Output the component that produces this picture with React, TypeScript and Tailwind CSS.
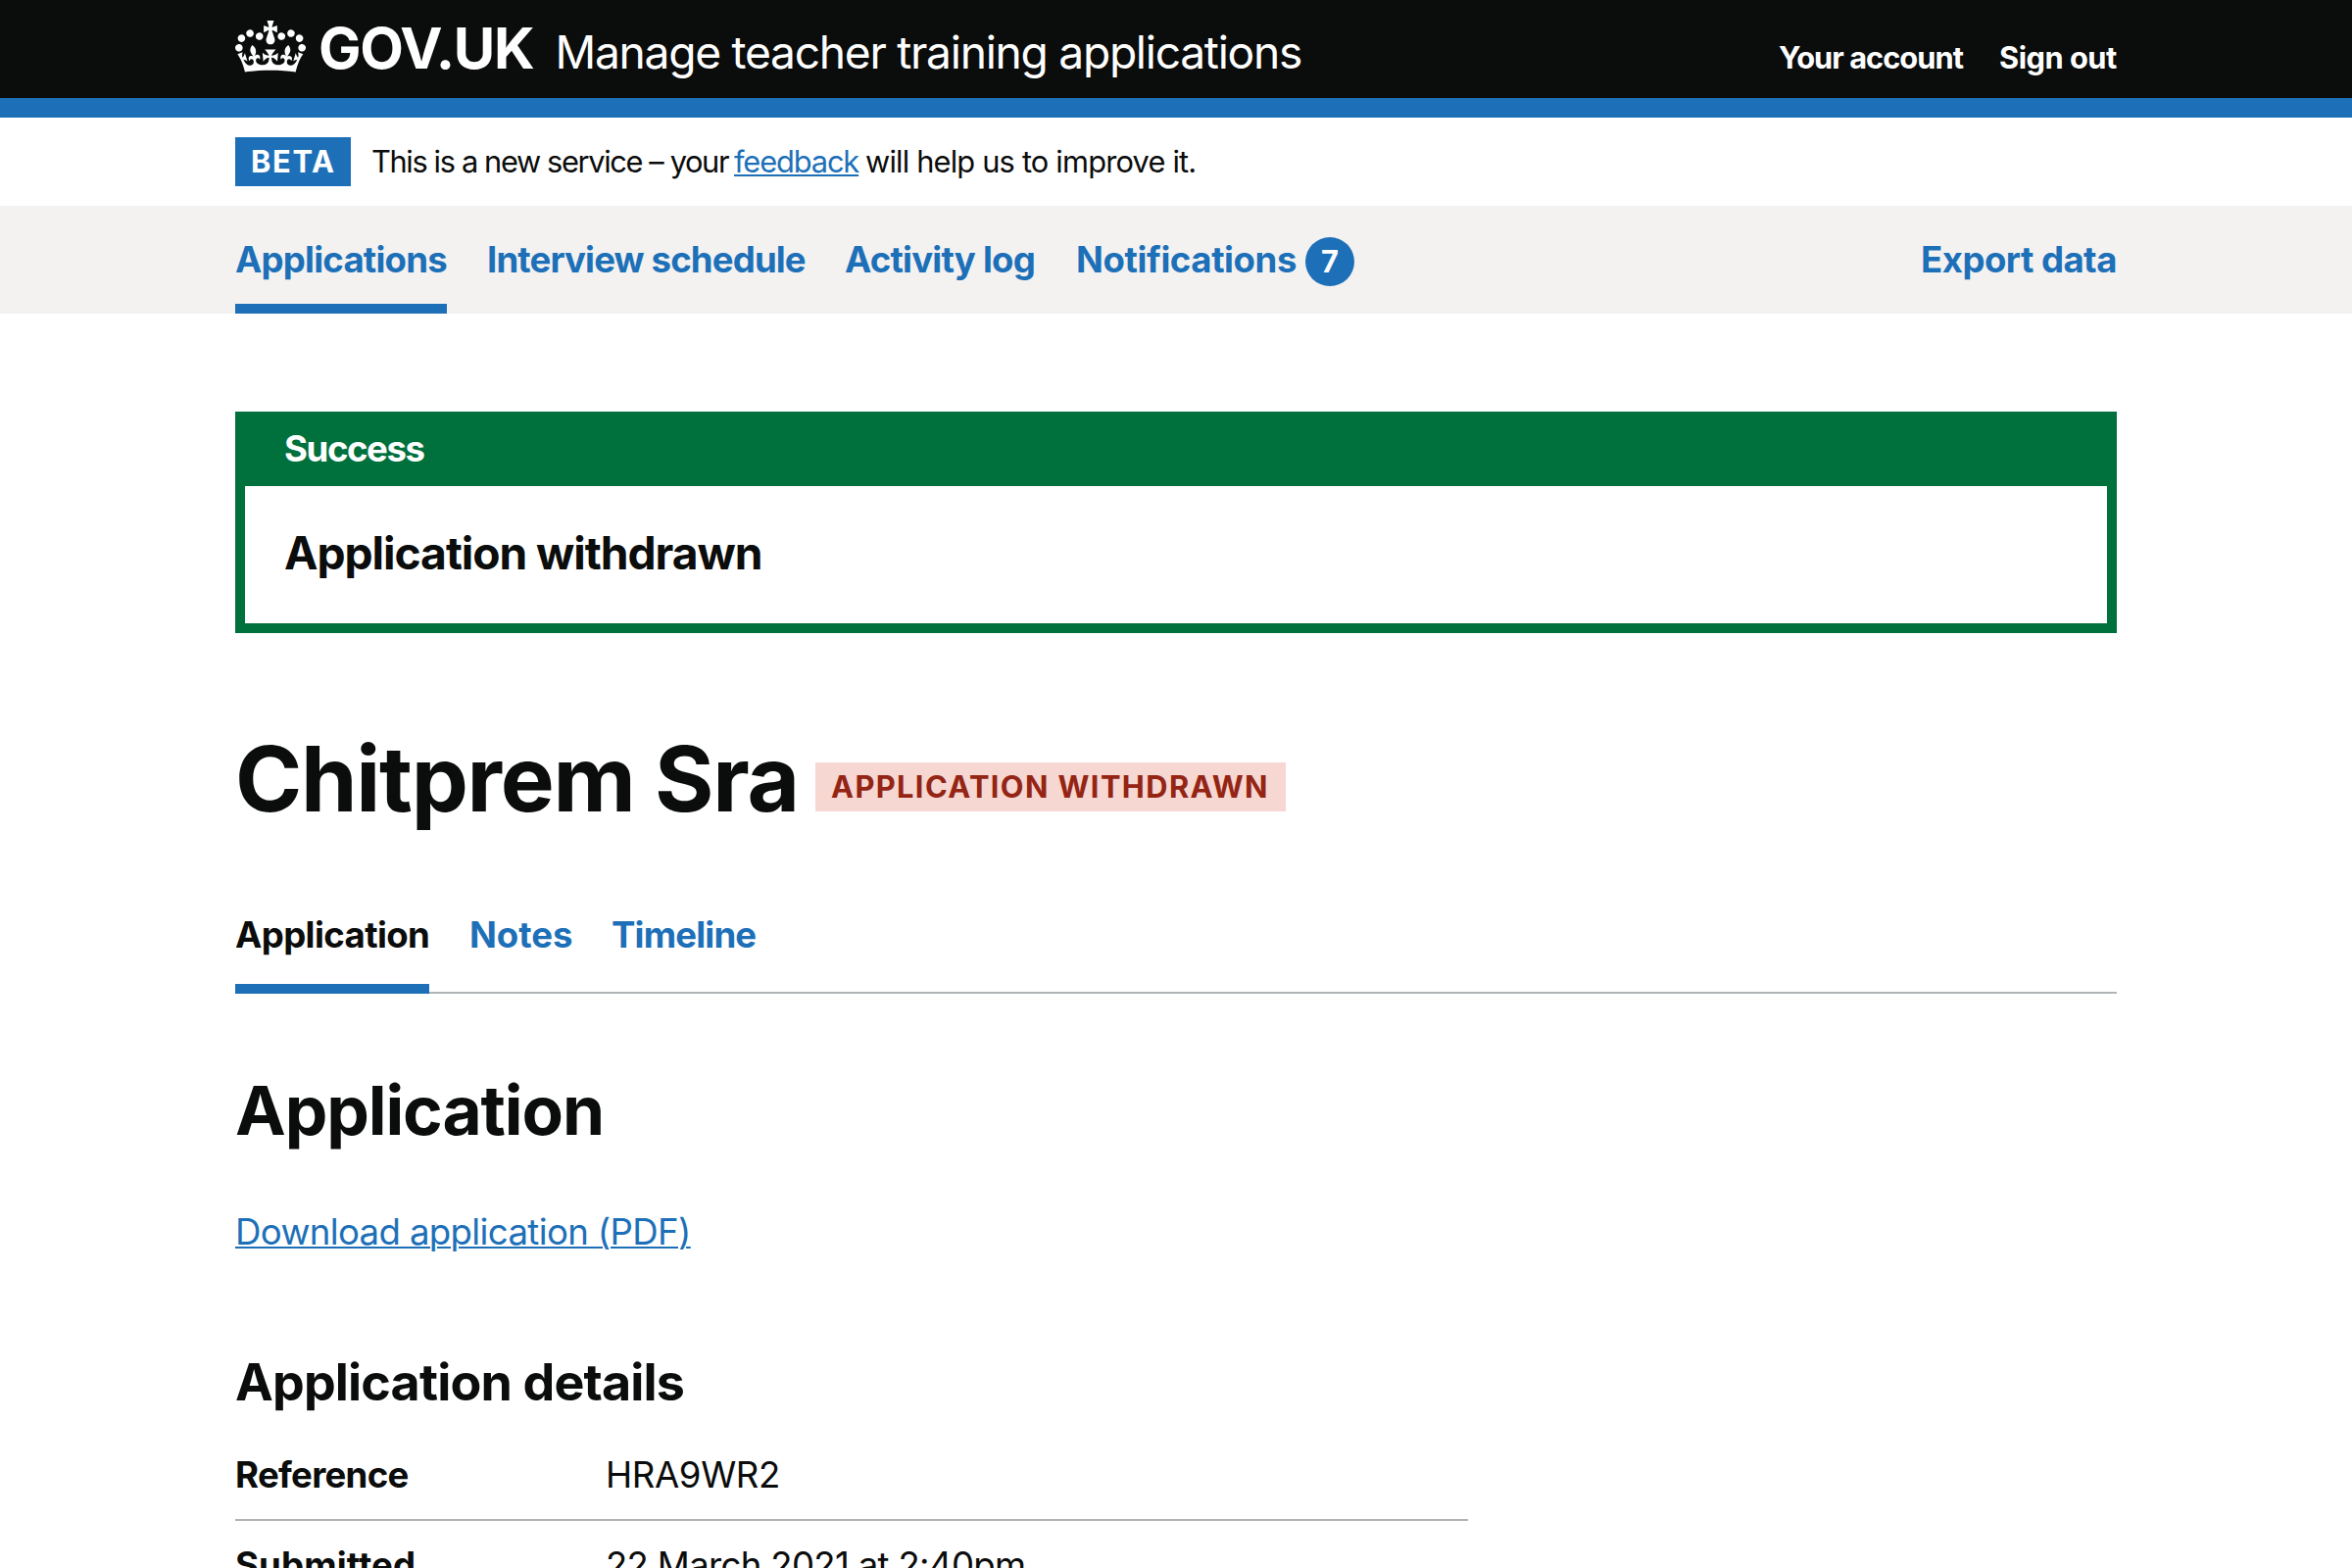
function Crown() {
  return (
    <svg viewBox="0 0 132 97" className="mt-[21px] h-[53px] w-[72px] shrink-0" fill="currentColor" aria-hidden="true">
      <path
        fillRule="evenodd"
        d="M25 30.2c3.5 1.5 7.7-.2 9.1-3.7 1.5-3.6-.2-7.8-3.9-9.2-3.6-1.4-7.6.3-9.1 3.9-1.4 3.5.3 7.5 3.9 9zM9 39.5c3.6 1.5 7.8-.2 9.2-3.7 1.5-3.6-.2-7.8-3.9-9.1-3.6-1.5-7.6.2-9.1 3.8-1.4 3.5.3 7.5 3.8 9zM4.4 57.2c3.5 1.5 7.7-.2 9.1-3.8 1.5-3.6-.2-7.7-3.9-9.1-3.5-1.5-7.6.3-9.1 3.8-1.4 3.5.3 7.6 3.9 9.1zm38.3-21.4c3.5 1.5 7.7-.2 9.1-3.8 1.5-3.6-.2-7.7-3.9-9.1-3.6-1.5-7.6.3-9.1 3.8-1.3 3.6.4 7.7 3.9 9.1zm64.4-5.6c-3.6 1.5-7.8-.2-9.1-3.7-1.5-3.6.2-7.8 3.8-9.2 3.6-1.4 7.7.3 9.2 3.9 1.3 3.5-.4 7.5-3.9 9zm15.9 9.3c-3.6 1.5-7.7-.2-9.1-3.7-1.5-3.6.2-7.8 3.7-9.1 3.6-1.5 7.7.2 9.2 3.8 1.5 3.5-.3 7.5-3.8 9zm4.7 17.7c-3.6 1.5-7.8-.2-9.2-3.8-1.5-3.6.2-7.7 3.9-9.1 3.6-1.5 7.7.3 9.2 3.8 1.3 3.5-.4 7.6-3.9 9.1zM89.3 35.8c-3.6 1.5-7.8-.2-9.2-3.8-1.4-3.6.2-7.7 3.9-9.1 3.6-1.5 7.7.3 9.2 3.8 1.4 3.6-.3 7.7-3.9 9.1zM69.7 17.7l8.9 4.7V9.3l-8.9 2.8c-.2-.3-.5-.6-.9-.9L72.4 0H59.6l3.5 11.2c-.3.3-.6.5-.9.9l-8.8-2.8v13.1l8.8-4.7c.3.3.6.7.9.9l-5 15.4v.1c-.2.8-.4 1.6-.4 2.4 0 4.1 3.1 7.5 7 8.1h.2c.3 0 .7.1 1 .1.4 0 .7 0 1-.1h.2c4-.6 7.1-4.1 7.1-8.1 0-.8-.1-1.7-.4-2.4V34l-5.1-15.4c.4-.2.7-.6 1-.9zM66 92.8c16.9 0 32.8 1.1 47.1 3.2 4-16.9 8.9-26.7 14-33.5l-9.6-3.4c1 4.9 1.1 7.2 0 10.2-1.5-1.4-3-4.3-4.2-8.7L108.6 76c2.8-2 5-3.2 7.5-3.3-4.4 9.4-10 11.9-13.6 11.2-4.3-.8-6.3-4.6-5.6-7.9 1-4.7 5.7-5.9 8-.5 4.3-8.7-3-11.4-7.6-8.8 7.1-7.2 7.9-13.5 2.1-21.1-8 6.1-8.1 12.3-4.5 20.8-4.7-5.4-12.1-2.5-9.5 6.2 3.4-5.2 7.9-2 7.2 3.1-.6 4.3-6.4 7.8-13.5 7.2-10.3-.9-10.9-8-11.2-13.8 2.5-.5 7.1 1.8 11 7.3L80.2 60c-4.1 4.4-8 5.3-12.3 5.4 1.4-4.4 8-11.6 8-11.6H55.5s6.4 7.2 7.9 11.6c-4.2-.1-8-1-12.3-5.4l1.4 16.4c3.9-5.5 8.5-7.7 10.9-7.3-.3 5.8-.9 12.8-11.1 13.8-7.2.6-12.9-2.9-13.5-7.2-.7-5 3.8-8.3 7.1-3.1 2.7-8.7-4.6-11.6-9.4-6.2 3.7-8.5 3.6-14.7-4.6-20.8-5.8 7.6-5 13.9 2.2 21.1-4.7-2.6-11.9.1-7.7 8.8 2.3-5.5 7.1-4.2 8.1.5.7 3.3-1.3 7.1-5.7 7.9-3.5.7-9-1.8-13.5-11.2 2.5.1 4.7 1.3 7.5 3.3l-4.7-15.4c-1.2 4.4-2.7 7.2-4.3 8.7-1.1-3-.9-5.3 0-10.2l-9.5 3.4c5 6.9 9.9 16.7 14 33.5 14.8-2.1 30.8-3.2 47.7-3.2z"
      />
    </svg>
  );
}

function Header() {
  return (
    <header className="border-b-[20px] border-[#1d70b8] bg-[#0b0c0c] text-white">
      <div className="mx-auto flex h-[100px] w-[1920px] items-start">
        <Crown />
        <div className="ml-[13px] flex grow items-baseline pt-5 leading-[58px]">
          <a className="w-[241.5px] text-[58px] font-bold tracking-[-0.0223em]">GOV.UK</a>
          <a className="grow text-[46.2px] tracking-[-0.028em]">Manage teacher training applications</a>
          <nav className="flex gap-9 text-[30.8px] font-bold">
            <a className="w-[189px] tracking-[-0.0316em]">Your account</a>
            <a className="w-[120px] tracking-[-0.0162em]">Sign out</a>
          </nav>
        </div>
      </div>
    </header>
  );
}

function PhaseBanner() {
  return (
    <div className="mx-auto flex h-[90px] w-[1920px] items-center text-[30.8px] leading-[50px]">
      <strong className="h-[50px] w-[118px] bg-[#1d70b8] pl-4 font-bold tracking-[0.055em] text-white">BETA</strong>
      <p className="ml-[21px] flex gap-[6px]">
        <span className="w-[364px] tracking-[-0.0445em]">This is a new service – your</span>
        <a className="w-[128px] tracking-[-0.037em] text-[#1d70b8] underline decoration-2 underline-offset-2">feedback</a>
        <span className="tracking-[-0.0265em]">will help us to improve it.</span>
      </p>
    </div>
  );
}

function PrimaryNav() {
  return (
    <nav className="bg-[#f3f2f1]">
      <div className="mx-auto flex h-[110px] w-[1920px] gap-10 text-[36.6px] leading-[90px] font-bold text-[#1d70b8]">
        <a className="w-[216px] border-b-[10px] border-[#1d70b8] pt-[10px] tracking-[-0.0215em]">Applications</a>
        <a className="w-[326px] pt-[10px] pl-px tracking-[-0.0236em]">Interview schedule</a>
        <a className="w-[195px] pt-[10px] tracking-[-0.0215em]">Activity log</a>
        <a className="flex grow pt-[10px]">
          <span className="w-[235px] pl-px tracking-[-0.0115em]">Notifications</span>
          <span className="mt-[22px] size-[50px] rounded-full bg-[#1d70b8] text-center text-[30.8px] leading-[50px] text-white">7</span>
        </a>
        <a className="w-[200px] pt-[10px] tracking-[-0.0145em]">Export data</a>
      </div>
    </nav>
  );
}

function SuccessBanner() {
  return (
    <section className="mt-[100px] border-[10px] border-[#00703c] font-bold">
      <h2 className="h-[66px] bg-[#00703c] pl-10 text-[36.6px] leading-[57px] tracking-[-0.0389em] text-white">Success</h2>
      <p className="h-[140px] pl-10 text-[46.2px] leading-[137px] tracking-[-0.0226em]">Application withdrawn</p>
    </section>
  );
}

function Tabs() {
  return (
    <nav className="mt-[61px] flex h-[109px] gap-10 border-b-2 border-[#b1b4b6] text-[36.6px] leading-[99px] font-bold text-[#1d70b8]">
      <a className="h-[109px] w-[198px] border-b-[10px] border-[#1d70b8] tracking-[-0.0165em] text-[#0b0c0c]">Application</a>
      <a className="w-[106px] pl-px tracking-[-0.001em]">Notes</a>
      <a className="tracking-[-0.0225em]">Timeline</a>
    </nav>
  );
}

function Details() {
  return (
    <dl className="mt-[19px] w-[1258px] text-[36.6px] leading-[90px]">
      <div className="flex h-[92px] border-b-2 border-[#b1b4b6]">
        <dt className="w-[378px] font-bold tracking-[-0.0189em]">Reference</dt>
        <dd className="tracking-[-0.01em]">HRA9WR2</dd>
      </div>
      <div className="flex h-[92px] border-b-2 border-[#b1b4b6]">
        <dt className="w-[378px] font-bold tracking-[0.0033em]">Submitted</dt>
        <dd className="tracking-[-0.0187em]">22 March 2021 at 2:40pm</dd>
      </div>
    </dl>
  );
}

export default function App() {
  return (
    <div className="h-[1600px] overflow-hidden bg-white font-['Inter','Liberation_Sans',sans-serif] whitespace-nowrap text-[#0b0c0c] antialiased">
      <Header />
      <PhaseBanner />
      <PrimaryNav />
      <main className="mx-auto w-[1920px]">
        <SuccessBanner />
        <div className="mt-[98px] flex h-[100px] items-start">
          <h1 className="w-[592px] text-[92.4px] leading-[100px] font-bold tracking-[-0.0138em]">Chitprem Sra</h1>
          <strong className="mt-[34px] h-[50px] w-[480px] bg-[#f6d7d2] pl-4 text-[30.8px] leading-[50px] font-bold tracking-[0.0451em] text-[#942514]">
            APPLICATION WITHDRAWN
          </strong>
        </div>
        <Tabs />
        <h2 className="mt-[79px] text-[69.3px] leading-[80px] font-bold tracking-[-0.016em]">Application</h2>
        <p className="mt-[59px] text-[36.6px] leading-[50px] tracking-[-0.0172em]">
          <a className="text-[#1d70b8] underline decoration-2 underline-offset-2">Download application (PDF)</a>
        </p>
        <h3 className="mt-[99px] text-[52px] leading-[60px] font-bold tracking-[-0.0162em]">Application details</h3>
        <Details />
      </main>
    </div>
  );
}
